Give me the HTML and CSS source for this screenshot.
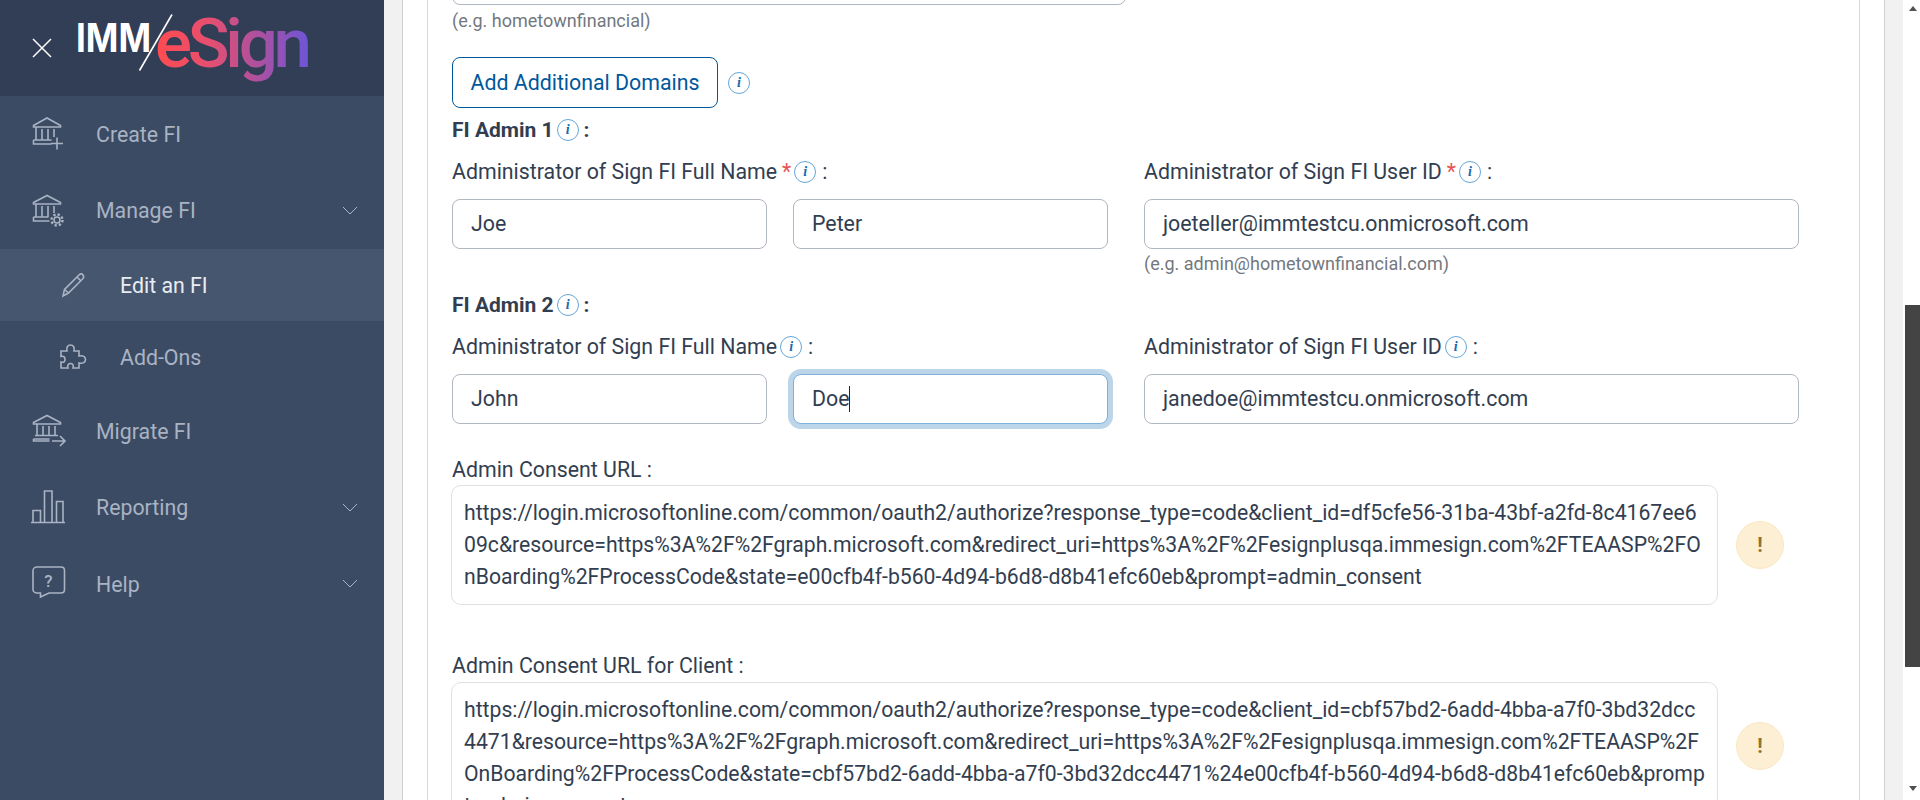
FILE: index.html
```html
<!DOCTYPE html>
<html lang="en">
<head>
<meta charset="utf-8">
<title>IMM eSign - Edit an FI</title>
<link rel="stylesheet" href="styles.css">
</head>
<body>
<aside class="sidebar">
  <header class="brand">
    <svg class="close-icon" viewBox="0 0 20 20"><path d="M1 1L19 19M19 1L1 19"/></svg>
    <svg class="logo" viewBox="0 0 250 96" role="img" aria-label="IMM eSign">
      <defs>
        <linearGradient id="logo-grad" gradientUnits="userSpaceOnUse" x1="86" y1="0" x2="237" y2="0">
          <stop offset="0" stop-color="#ff4b50"/>
          <stop offset="0.35" stop-color="#e64f70"/>
          <stop offset="0.7" stop-color="#a851a3"/>
          <stop offset="1" stop-color="#6f55d6"/>
        </linearGradient>
      </defs>
      <text class="logo-imm" x="6" y="52" textLength="75" lengthAdjust="spacingAndGlyphs">IMM</text>
      <text class="logo-esign" x="85" y="67" textLength="157" fill="url(#logo-grad)">eSign</text>
      <path class="logo-slash" d="M102 14.5L69.500 70.500"/>
    </svg>
  </header>
  <nav class="nav">
    <a class="nav-item">
      <svg class="nav-icon" viewBox="0 0 40 40"><path d="M5.500 11.500L19 4l13.500 7.500V13h-27zM8 13v13M14 15v11M20 15v11M26 15v8M5.500 26h18M5.500 26v4h18M23 29.500h12M29 23.500v12"/></svg>
      <span>Create FI</span>
    </a>
    <a class="nav-item">
      <svg class="nav-icon" viewBox="0 0 40 40"><path d="M5.500 11.500L19 4.500l13.500 7V13h-27zM8 13v13M14 15v11M20 15v11M26 15v7M5.500 26h15M5.500 26v4h16"/><circle cx="29" cy="29" r="3"/><circle class="gear" cx="29" cy="29" r="5.500"/></svg>
      <span>Manage FI</span>
      <svg class="chevron" viewBox="0 0 16 10"><path d="M1 1l7 7 7-7"/></svg>
    </a>
    <a class="nav-sub is-active">
      <svg class="sub-icon" viewBox="0 0 28 28"><path d="M4 25l1.500-6.500L20 4c1.500-1.500 3-1.500 4 0s1 2.500 0 3.500L9.500 22zM5.500 18.500l4 3.500M18 6l4 4"/></svg>
      <span>Edit an FI</span>
    </a>
    <a class="nav-sub">
      <svg class="sub-icon" viewBox="0 0 28 28"><path d="M2 8h6c-1-4 1-6 3.500-6S16 4 15 8h5v5c4-1 6.500 1 6.500 3.500S24 21 20 20v5h-6c1-3-.5-4.500-2.500-4.500S8 22 9 25H2v-6c3 1 4-.5 4-2.500s-1-4-4-3z"/></svg>
      <span>Add-Ons</span>
    </a>
    <a class="nav-item">
      <svg class="nav-icon" viewBox="0 0 40 40"><path d="M5.500 11.500L19 4.500l13.500 7V13h-27zM9 13v11M15 15v9M21 15v9M27 15v9M7 24.500h23M5.500 28h16M5.500 28v2h16M24 30h13M32 25l5 5-5 5"/></svg>
      <span>Migrate FI</span>
    </a>
    <a class="nav-item">
      <svg class="nav-icon" viewBox="0 0 40 40"><path d="M3 34.500h34M5 34V22.500h7.500V34M16.500 34V3h7.500v31M28.500 34V13.500H35V34"/></svg>
      <span>Reporting</span>
      <svg class="chevron" viewBox="0 0 16 10"><path d="M1 1l7 7 7-7"/></svg>
    </a>
    <a class="nav-item">
      <svg class="nav-icon" viewBox="0 0 40 40"><path d="M9 3h24c2 0 3.500 1.500 3.500 3.500v19c0 2-1.500 3.500-3.500 3.500H21l-8.500 4v-4H9c-2 0-4-1.500-4-3.500v-19C5 4.500 7 3 9 3z"/><text class="help-mark" x="20.500" y="22.500">?</text></svg>
      <span>Help</span>
      <svg class="chevron" viewBox="0 0 16 10"><path d="M1 1l7 7 7-7"/></svg>
    </a>
  </nav>
</aside>

<main class="main">
  <div class="panel">
    <section class="card">
      <div class="field domain-field"></div>
      <p class="hint domain-hint">(e.g. hometownfinancial)</p>

      <div class="action-row">
        <button class="btn-outline" type="button">Add Additional Domains</button>
        <span class="info">i</span>
      </div>

      <h3 class="group-title">FI Admin 1<span class="info">i</span><span class="title-colon">:</span></h3>
      <div class="admin-row">
        <div class="admin-col-name">
          <label class="field-label">Administrator of Sign FI Full Name<span class="req">*</span><span class="info">i</span><span class="colon">:</span></label>
          <div class="name-pair">
            <div class="field">Joe</div>
            <div class="field">Peter</div>
          </div>
        </div>
        <div class="admin-col-id">
          <label class="field-label">Administrator of Sign FI User ID<span class="req">*</span><span class="info">i</span><span class="colon">:</span></label>
          <div class="field">joeteller@immtestcu.onmicrosoft.com</div>
          <p class="hint">(e.g. admin@hometownfinancial.com)</p>
        </div>
      </div>

      <h3 class="group-title group-title-second">FI Admin 2<span class="info">i</span><span class="title-colon">:</span></h3>
      <div class="admin-row">
        <div class="admin-col-name">
          <label class="field-label">Administrator of Sign FI Full Name<span class="info">i</span><span class="colon">:</span></label>
          <div class="name-pair">
            <div class="field">John</div>
            <div class="field is-focused">Doe<span class="caret"></span></div>
          </div>
        </div>
        <div class="admin-col-id">
          <label class="field-label">Administrator of Sign FI User ID<span class="info">i</span><span class="colon">:</span></label>
          <div class="field">janedoe@immtestcu.onmicrosoft.com</div>
        </div>
      </div>

      <label class="field-label consent-label">Admin Consent URL :</label>
      <div class="consent-row">
        <div class="url-box">https://login.microsoftonline.com/common/oauth2/authorize?response_type=code&amp;client_id=df5cfe56-31ba-43bf-a2fd-8c4167ee6<br>09c&amp;resource=https%3A%2F%2Fgraph.microsoft.com&amp;redirect_uri=https%3A%2F%2Fesignplusqa.immesign.com%2FTEAASP%2FO<br>nBoarding%2FProcessCode&amp;state=e00cfb4f-b560-4d94-b6d8-d8b41efc60eb&amp;prompt=admin_consent</div>
        <span class="warn">!</span>
      </div>

      <label class="field-label consent-label-second">Admin Consent URL for Client :</label>
      <div class="consent-row">
        <div class="url-box url-box-tall">https://login.microsoftonline.com/common/oauth2/authorize?response_type=code&amp;client_id=cbf57bd2-6add-4bba-a7f0-3bd32dcc<br>4471&amp;resource=https%3A%2F%2Fgraph.microsoft.com&amp;redirect_uri=https%3A%2F%2Fesignplusqa.immesign.com%2FTEAASP%2F<br>OnBoarding%2FProcessCode&amp;state=cbf57bd2-6add-4bba-a7f0-3bd32dcc4471%24e00cfb4f-b560-4d94-b6d8-d8b41efc60eb&amp;promp<br>t=admin_consent</div>
        <span class="warn warn-high">!</span>
      </div>
    </section>
  </div>
  <div class="scrollbar">
    <span class="arrow-up"></span>
    <span class="thumb"></span>
    <span class="arrow-down"></span>
  </div>
</main>
</body>
</html>
```
FILE: styles.css
```css
* { box-sizing: border-box; }

html, body { height: 100%; }

body {
  margin: 0;
  height: 800px;
  overflow: hidden;
  display: flex;
  font-family: Roboto, "Liberation Sans", sans-serif;
  font-size: 21.33px;
  color: #323e50;
  background: #f1f1f1;
}

/* Sidebar */
.sidebar {
  width: 384px;
  flex: none;
  background: #3c4b64;
}

.brand {
  height: 96px;
  padding-left: 32px;
  display: flex;
  align-items: center;
  background: #323d56;
}

.close-icon {
  width: 20px;
  height: 20px;
  flex: none;
}

.close-icon path {
  stroke: #fff;
  stroke-width: 1.5;
  fill: none;
}

.logo {
  width: 250px;
  height: 96px;
  margin-left: 18px;
  flex: none;
}

.logo-imm {
  font-family: Inter, Roboto, sans-serif;
  font-weight: 700;
  font-size: 39px;
  fill: #fff;
}

.logo-esign {
  font-family: Roboto, Inter, sans-serif;
  font-weight: 500;
  font-size: 69px;
}

.logo-slash {
  stroke: #fff;
  stroke-width: 1.6;
  fill: none;
}

.nav {
  display: flex;
  flex-direction: column;
}

.nav-item,
.nav-sub {
  display: flex;
  align-items: center;
  color: #a9b3c3;
  font-size: 21.33px;
}

.nav-item {
  height: 76.5px;
  padding: 0 26px 0 28px;
}

.nav-sub {
  height: 72px;
  padding: 0 0 0 59px;
}

.nav-sub.is-active {
  background: #46566e;
  color: #e9ecf1;
}

.nav-icon {
  width: 40px;
  height: 40px;
  margin-right: 28px;
  flex: none;
}

.sub-icon {
  width: 28px;
  height: 28px;
  margin-right: 33px;
  flex: none;
}

.nav-icon path,
.nav-icon circle,
.sub-icon path {
  stroke: #a9b3c3;
  stroke-width: 1.6;
  fill: none;
}

.nav-icon .gear {
  stroke-width: 2.400;
  stroke-dasharray: 2.300 2;
}

.help-mark {
  font-family: Roboto, sans-serif;
  font-size: 17px;
  font-weight: 500;
  fill: #a9b3c3;
  text-anchor: middle;
}

.chevron {
  width: 16px;
  height: 10px;
  margin-left: auto;
  flex: none;
}

.chevron path {
  stroke: #a9b3c3;
  stroke-width: 1;
  fill: none;
}

/* Main area */
.main {
  flex: 1;
  display: flex;
  min-width: 0;
  padding-left: 18px;
}

.panel {
  width: 1483px;
  flex: none;
  height: 800px;
  padding: 0 24px;
  background: #fff;
  border-left: 1px solid #cfcfcf;
  border-right: 1px solid #cfcfcf;
  overflow: hidden;
  margin-right: 18px;
}

.card {
  height: 800px;
  padding-left: 24px;
  border-left: 1px solid #d6d6d6;
  border-right: 1px solid #d6d6d6;
  overflow: hidden;
}

.domain-field {
  width: 674px;
  margin-top: -45px;
}

.field {
  height: 50px;
  padding: 0 18px;
  display: flex;
  align-items: center;
  background: #fff;
  border: 1px solid #b1b7c1;
  border-radius: 8px;
  line-height: 48px;
  color: #323e50;
}

.is-focused {
  border-color: #7fb0dc;
  box-shadow: 0 0 0 5px #bcd5e9;
}

.caret {
  width: 1px;
  height: 26px;
  background: #1d2533;
}

.hint {
  margin: 4px 0 0;
  height: 22px;
  line-height: 22px;
  font-size: 18px;
  color: #73787f;
}

.domain-hint {
  margin-top: 5px;
}

.action-row {
  display: flex;
  align-items: center;
  margin-top: 25px;
}

.btn-outline {
  width: 266px;
  height: 51px;
  padding: 0;
  background: #fff;
  border: 1.500px solid #00589c;
  border-radius: 8px;
  color: #00589c;
  font: 21.33px Roboto, sans-serif;
}

.action-row .info {
  margin-left: 10px;
}

.info {
  width: 22px;
  height: 22px;
  margin-left: 3px;
  flex: none;
  display: inline-flex;
  align-items: center;
  justify-content: center;
  vertical-align: 3px;
  border: 1px solid #64a6d8;
  border-radius: 50%;
  font: italic 700 14px "Liberation Serif", serif;
  color: #1769aa;
}

.group-title {
  margin: 10px 0 0;
  height: 24px;
  line-height: 24px;
  font-size: 21px;
  font-weight: 700;
  color: #323e50;
}

.group-title-second {
  margin-top: 18px;
}

.title-colon {
  margin-left: 5px;
}

.admin-row {
  display: flex;
  gap: 36px;
  margin-top: 18px;
}

.admin-col-name {
  width: 656px;
  flex: none;
}

.admin-col-id {
  width: 655px;
  flex: none;
}

.name-pair {
  display: grid;
  grid-template-columns: 315px 315px;
  column-gap: 26px;
}

.field-label {
  display: block;
  height: 24px;
  line-height: 24px;
  margin-bottom: 15px;
  font-size: 21.33px;
  color: #323e50;
}

.req {
  margin-left: 5px;
  color: #e55353;
}

.colon {
  margin-left: 6px;
}

.consent-label {
  margin: 34px 0 3px;
}

.consent-label-second {
  margin: 49px 0 4px;
}

.consent-row {
  display: flex;
  align-items: center;
  width: 1327px;
}

.url-box {
  width: 1267px;
  height: 120px;
  margin-left: -1px;
  flex: none;
  padding: 11px 10px 0 12px;
  font-size: 21.2px;
  line-height: 32px;
  white-space: nowrap;
  background: #fff;
  border: 1px solid #dfe1e6;
  border-radius: 10px;
  overflow: hidden;
}

.url-box-tall {
  height: 152px;
}

.warn {
  width: 48px;
  height: 48px;
  margin-left: 18px;
  flex: none;
  display: flex;
  align-items: center;
  justify-content: center;
  background: #fdefd3;
  border: 1px solid #fbe8c4;
  border-radius: 50%;
  font-size: 20px;
  font-weight: 700;
  color: #8f7232;
}

.warn-high {
  align-self: flex-start;
  margin-top: 40px;
}

/* Window scrollbar */
.scrollbar {
  width: 17px;
  flex: none;
  height: 800px;
  padding-left: 2px;
  display: flex;
  flex-direction: column;
  align-items: center;
  background: #fff;
}

.arrow-up,
.arrow-down {
  width: 0;
  height: 0;
  border-left: 4px solid transparent;
  border-right: 4px solid transparent;
}

.arrow-up {
  margin-top: 6px;
  border-bottom: 5px solid #505050;
}

.arrow-down {
  margin-top: 119px;
  border-top: 5px solid #505050;
}

.thumb {
  width: 15px;
  height: 362px;
  margin-top: 294px;
  background: #444;
}
```
